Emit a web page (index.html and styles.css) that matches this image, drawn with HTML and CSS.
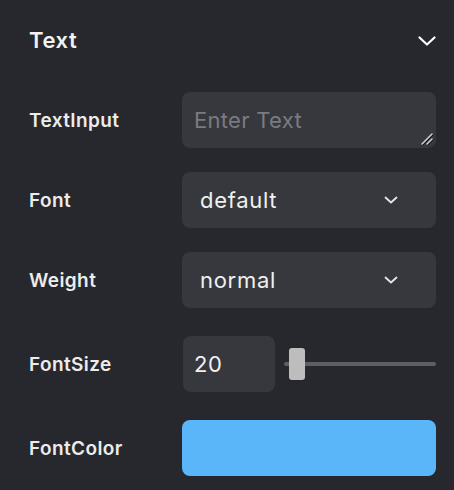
FILE: index.html
```html
<!DOCTYPE html>
<html>
<head>
<meta charset="utf-8">
<link rel="stylesheet" href="styles.css">
</head>
<body>
<div class="panel">
  <div class="header">
    <span class="title">Text</span>
    <svg class="chev-lg" width="18" height="10" viewBox="0 0 18 10"><path d="M1.5 1.5 L9 8.5 L16.5 1.5" fill="none" stroke="#ffffff" stroke-width="2.2" stroke-linecap="round" stroke-linejoin="round"/></svg>
  </div>
  <div class="row r1">
    <div class="label">TextInput</div>
    <div class="box textarea">
      <span class="placeholder">Enter Text</span>
      <svg class="grip" width="14" height="14" viewBox="0 0 14 14"><path d="M2 12 L12 2 M7 12 L12 7" stroke="#d0d0d0" stroke-width="1.5" stroke-linecap="round"/><path d="M3 13 L13 3 M8 13 L13 8" stroke="#111" stroke-width="1" stroke-linecap="round"/></svg>
    </div>
  </div>
  <div class="row r2">
    <div class="label">Font</div>
    <div class="box select">
      <span class="value">default</span>
      <svg class="chev-sm" width="14" height="8" viewBox="0 0 14 8"><path d="M1.5 1.5 L7 6.5 L12.5 1.5" fill="none" stroke="#e6e6e6" stroke-width="1.8" stroke-linecap="round" stroke-linejoin="round"/></svg>
    </div>
  </div>
  <div class="row r3">
    <div class="label">Weight</div>
    <div class="box select">
      <span class="value">normal</span>
      <svg class="chev-sm" width="14" height="8" viewBox="0 0 14 8"><path d="M1.5 1.5 L7 6.5 L12.5 1.5" fill="none" stroke="#e6e6e6" stroke-width="1.8" stroke-linecap="round" stroke-linejoin="round"/></svg>
    </div>
  </div>
  <div class="row r4">
    <div class="label">FontSize</div>
    <div class="sizectl">
      <div class="box num"><span class="value">20</span></div>
      <div class="slider">
        <div class="track"></div>
        <div class="thumb"></div>
      </div>
    </div>
  </div>
  <div class="row r5">
    <div class="label">FontColor</div>
    <div class="box color"></div>
  </div>
</div>
</body>
</html>
```
FILE: styles.css
```css
html, body {
  margin: 0;
  padding: 0;
  background: #27282d;
}
body {
  width: 454px;
  height: 490px;
  overflow: hidden;
  font-family: Inter, "Noto Sans", sans-serif;
  color: #ededed;
}
.panel {
  padding: 0 18px 0 29px;
}
.header {
  height: 80px;
  display: flex;
  align-items: center;
  justify-content: space-between;
}
.title {
  font-size: 22px;
  font-weight: 600;
  letter-spacing: 0.6px;
  color: #f2f2f2;
}
.chev-lg {
  margin-top: 2px;
}
.row {
  display: flex;
  align-items: center;
  height: 56px;
}
.r1 { margin-top: 12px; }
.r2 { margin-top: 24px; }
.r3 { margin-top: 24px; }
.r4 { margin-top: 28px; }
.r5 { margin-top: 28px; }
.label {
  width: 153px;
  font-size: 19px;
  font-weight: 600;
  letter-spacing: 0.4px;
  color: #ececec;
}
.box {
  background: #37383e;
  border-radius: 8px;
  height: 56px;
  box-sizing: border-box;
  display: flex;
  align-items: center;
}
.textarea {
  flex: 1;
  position: relative;
  padding-left: 12px;
}
.placeholder {
  font-size: 22px;
  letter-spacing: 0.3px;
  color: #7a7b80;
}
.grip {
  position: absolute;
  right: 2px;
  bottom: 2px;
}
.select {
  flex: 1;
  padding: 0 38px 0 18px;
  justify-content: space-between;
}
.value {
  font-size: 22px;
  letter-spacing: 0.7px;
  color: #f0f0f0;
}
.sizectl {
  flex: 1;
  display: flex;
  align-items: center;
}
.num {
  width: 92px;
  margin-left: 1px;
  padding-left: 11px;
}
.slider {
  flex: 1;
  margin-left: 9px;
  height: 32px;
  position: relative;
  display: flex;
  align-items: center;
}
.track {
  flex: 1;
  height: 4px;
  border-radius: 2px;
  background: #5e5f64;
}
.thumb {
  position: absolute;
  left: 5px;
  top: 0;
  width: 16px;
  height: 32px;
  border-radius: 3px;
  background: #bdbdbd;
}
.color {
  flex: 1;
  background: #5ab5f9;
}
```
